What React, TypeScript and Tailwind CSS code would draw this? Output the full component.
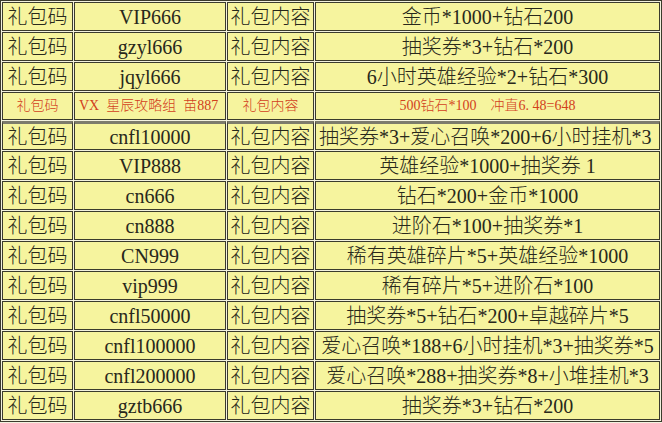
const rows: { code: string; content: string; wide?: boolean }[] = [
  { code: 'VIP666', content: '金币*1000+钻石200' },
  { code: 'gzyl666', content: '抽奖券*3+钻石*200' },
  { code: 'jqyl666', content: '6小时英雄经验*2+钻石*300' },
  { code: 'cnfl10000', content: '抽奖券*3+爱心召唤*200+6小时挂机*3', wide: true },
  { code: 'VIP888', content: '英雄经验*1000+抽奖券 1' },
  { code: 'cn666', content: '钻石*200+金币*1000' },
  { code: 'cn888', content: '进阶石*100+抽奖券*1' },
  { code: 'CN999', content: '稀有英雄碎片*5+英雄经验*1000' },
  { code: 'vip999', content: '稀有碎片*5+进阶石*100' },
  { code: 'cnfl50000', content: '抽奖券*5+钻石*200+卓越碎片*5' },
  { code: 'cnfl100000', content: '爱心召唤*188+6小时挂机*3+抽奖券*5' },
  { code: 'cnfl200000', content: '爱心召唤*288+抽奖券*8+小堆挂机*3' },
  { code: 'gztb666', content: '抽奖券*3+钻石*200' },
];

const cell = 'border border-[#3b3b2c] bg-[#f6f49e] p-0 text-center whitespace-nowrap overflow-hidden';

export default function App() {
  return (
    <div className="w-[662px] h-[423px] overflow-hidden bg-[#f3f2df] font-['Liberation_Serif','Noto_Sans_CJK_SC',serif] font-light text-[#28281b]">
      <table className="w-[662px] table-fixed border-separate border-spacing-[1px] border border-[#3b3b2c] bg-[#f3f2df]">
        <colgroup>
          <col className="w-[71px]" />
          <col className="w-[152px]" />
          <col className="w-[87px]" />
          <col />
        </colgroup>
        <tbody className="text-[20px] leading-none">
          {rows.slice(0, 3).map((r) => (
            <tr key={r.code} className="h-[29px]">
              <td className={cell}>礼包码</td>
              <td className={cell}>{r.code}</td>
              <td className={cell}>礼包内容</td>
              <td className={cell}>{r.content}</td>
            </tr>
          ))}
          <tr className="h-[28px] text-[14px] text-[#d2401c]">
            <td className={cell}>礼包码</td>
            <td className={`${cell} !text-left pl-[4px]`}>VX&nbsp;&nbsp;星辰攻略组&nbsp;&nbsp;苗887</td>
            <td className={cell}>礼包内容</td>
            <td className={cell}>500钻石*100&nbsp;&nbsp;&nbsp;&nbsp;冲直6.&nbsp;48=648</td>
          </tr>
          {rows.slice(3).map((r, i) => {
            const top = i === 0 ? ' border-t-[3px] border-t-[#7c7b6c]' : '';
            return (
              <tr key={r.code} className="h-[29px]">
                <td className={cell + top}>礼包码</td>
                <td className={cell + top}>{r.code}</td>
                <td className={cell + top}>礼包内容</td>
                <td className={cell + top + (r.wide ? ' !text-left pl-[3px]' : '')}>{r.content}</td>
              </tr>
            );
          })}
        </tbody>
      </table>
    </div>
  );
}
